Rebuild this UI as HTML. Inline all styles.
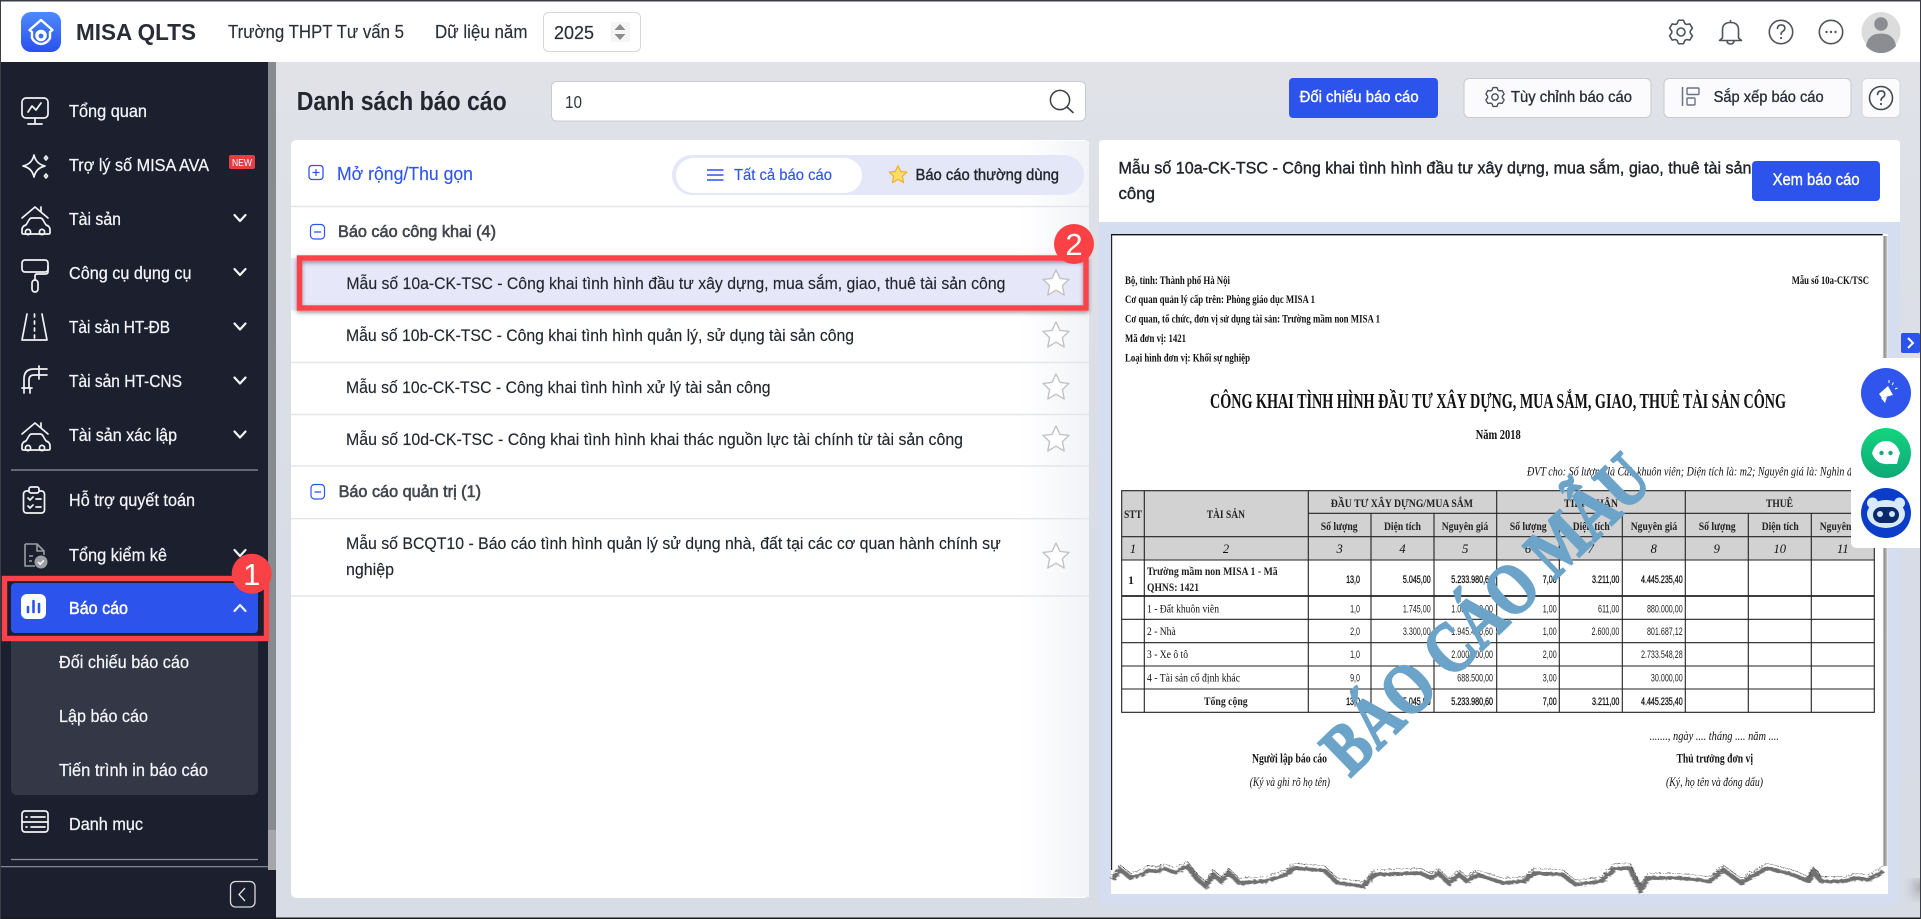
<!DOCTYPE html>
<html lang="vi">
<head>
<meta charset="utf-8">
<title>MISA QLTS</title>
<style>
html,body{margin:0;padding:0;width:1921px;height:919px;overflow:hidden;background:#dfe1e8}
svg{display:block;position:absolute;left:0;top:0}
text{font-family:"Liberation Sans","Noto Sans CJK SC",sans-serif;white-space:pre}
.h{font-size:18px;fill:#2b2f3a;stroke:#2b2f3a;stroke-width:.15}
.n{font-size:17.5px;fill:#f4f5f8;stroke:#f4f5f8;stroke-width:.25}
.b{font-size:16px;font-weight:400;fill:#2b2f3a;stroke:#2b2f3a;stroke-width:.35}
.r{font-size:17px;fill:#23262e;stroke:#23262e;stroke-width:.15}
.g{font-size:16.5px;fill:#43464e;stroke:#43464e;stroke-width:.6}
.bl{fill:#2f55ed;stroke:#2f55ed;stroke-width:.15}
text.s,.s text{font-family:"Liberation Serif","Noto Serif CJK SC",serif;fill:#111}
.sb{font-size:11.5px;font-weight:700}
.si{font-size:12.5px;font-style:italic}
.nu text,.nb text{font-size:11px;fill:#222;text-anchor:end}
.nb text{fill:#111;stroke:#111;stroke-width:.35}
.th text,text.th{font-family:"Liberation Serif",serif;font-size:12px;font-weight:700;fill:#222}
.c{text-anchor:middle}
.ln{stroke:#222;stroke-width:1.1}
.ic{fill:none;stroke:#f2f3f6;stroke-width:1.7;stroke-linecap:round;stroke-linejoin:round}
.tp{fill:none;stroke:#50535a;stroke-width:1.6;stroke-linecap:round;stroke-linejoin:round}
.chev{fill:none;stroke:#f4f5f8;stroke-width:2.2;stroke-linecap:round;stroke-linejoin:round}
.sep{stroke:#e4e6ea;stroke-width:1.4}
.star{fill:#fff;stroke:#c2c2c2;stroke-width:1.4;stroke-linejoin:round}
</style>
</head>
<body>
<svg width="1921" height="919" viewBox="0 0 1921 919" xmlns="http://www.w3.org/2000/svg">
<defs>
<linearGradient id="lg" x1="0" y1="0" x2="0" y2="1"><stop offset="0" stop-color="#4d8bfb"/><stop offset="1" stop-color="#2a50ee"/></linearGradient>
<linearGradient id="mbg" x1="0" y1="0" x2="0" y2="1"><stop offset="0" stop-color="#e0e2e8"/><stop offset=".6" stop-color="#d8dce6"/><stop offset="1" stop-color="#d8dce5"/></linearGradient>
<linearGradient id="pg" x1="0" y1="0" x2="1" y2="0"><stop offset="0" stop-color="#f2f4f8" stop-opacity="0"/><stop offset="1" stop-color="#f1f3f7"/></linearGradient>
<linearGradient id="sh" x1="0" y1="0" x2="1" y2="0"><stop offset="0" stop-color="#fff"/><stop offset=".35" stop-color="#8e8e8e"/><stop offset="1" stop-color="#d0d0d0"/></linearGradient>
<linearGradient id="gc" x1="0" y1="0" x2="0" y2="1"><stop offset="0" stop-color="#12d47e"/><stop offset="1" stop-color="#10a878"/></linearGradient>
<radialGradient id="cr" cx="1" cy="0.4" r="1"><stop offset="0" stop-color="#9a9a9a"/><stop offset="1" stop-color="#d8dce5" stop-opacity="0"/></radialGradient>
<filter id="bl1" x="-5%" y="-50%" width="110%" height="200%"><feTurbulence type="fractalNoise" baseFrequency=".18" numOctaves="2" seed="4" result="t"/><feDisplacementMap in="SourceGraphic" in2="t" scale="10" result="d"/><feGaussianBlur in="d" stdDeviation="1.1"/></filter>
<filter id="jit" x="-5%" y="-50%" width="110%" height="200%"><feTurbulence type="fractalNoise" baseFrequency=".18" numOctaves="2" seed="4" result="t"/><feDisplacementMap in="SourceGraphic" in2="t" scale="10"/></filter>
<filter id="ds" x="-5%" y="-20%" width="110%" height="150%"><feDropShadow dx="0" dy="2" stdDeviation="2" flood-color="#000" flood-opacity=".4"/></filter>
<path id="st" d="M0 -13 L4 -4.6 L13 -3.6 L6.4 2.6 L8.2 12 L0 7.2 L-8.2 12 L-6.4 2.6 L-13 -3.6 L-4 -4.6 Z"/>
<path id="gear" d="M-3.78 -8.5 L-2.5 -11.74 L2.5 -11.74 L3.78 -8.5 L5.47 -7.52 L8.92 -8.03 L11.41 -3.71 L9.25 -.97 L9.25 .97 L11.41 3.71 L8.92 8.03 L5.47 7.52 L3.78 8.5 L2.5 11.74 L-2.5 11.74 L-3.78 8.5 L-5.47 7.52 L-8.92 8.03 L-11.41 3.71 L-9.25 .97 L-9.25 -.97 L-11.41 -3.71 L-8.92 -8.03 L-5.47 -7.52 Z"/>
</defs>

<!-- backgrounds -->
<rect x="276" y="62" width="1645" height="857" fill="url(#mbg)"/>
<rect x="0" y="0" width="1921" height="62" fill="#fff"/>
<rect x="0" y="62" width="268" height="857" fill="#1c1f2e"/>
<rect x="268" y="62" width="8" height="768" fill="#888b8e"/>
<rect x="268" y="830" width="8" height="40" fill="#a4a6a9"/>
<rect x="268" y="870" width="8" height="49" fill="#1c1f2e"/>

<!-- HEADER -->
<rect x="21" y="12" width="40" height="40" rx="10" fill="url(#lg)"/>
<path d="M41 20 L29.5 30 L32 32 L32 38 Q35 43.5 41 44 Q47 43.5 50 38 L50 32 L52.5 30 Z" fill="none" stroke="#fff" stroke-width="2.4" stroke-linejoin="round"/>
<circle cx="41" cy="35.5" r="5.8" fill="#fff"/><circle cx="41" cy="36" r="2.4" fill="#3a6ff2"/>
<text x="76" y="40" font-size="23" font-weight="700" fill="#2a2d38" textLength="120" lengthAdjust="spacingAndGlyphs">MISA QLTS</text>
<text class="h" x="228" y="38" textLength="176" lengthAdjust="spacingAndGlyphs">Trường THPT Tư vấn 5</text>
<text class="h" x="435" y="38" textLength="92.5" lengthAdjust="spacingAndGlyphs">Dữ liệu năm</text>
<rect x="543.5" y="12.5" width="97" height="39" rx="5" fill="#fff" stroke="#d5d7dd"/>
<text x="554" y="39" font-size="18.5" fill="#2b2f3a" stroke="#2b2f3a" stroke-width=".2" textLength="40" lengthAdjust="spacingAndGlyphs">2025</text>
<rect x="611" y="22" width="19" height="20" fill="#f5f5f5"/>
<path d="M620 24 L625.5 30 L614.5 30 Z M620 40 L625.5 34 L614.5 34 Z" fill="#8d8d8d"/>
<!-- header right icons -->
<g class="tp">
<g transform="translate(1681 32)">
<use href="#gear"/>
<circle r="4"/>
</g>
<path d="M1730.5 20.5 v2 M1722.5 38 v-8 q0 -7.5 8 -7.5 t8 7.5 v8 l3 2.5 h-22 z M1727 40.5 q0 3.5 3.5 3.5 t3.5 -3.5"/>
<circle cx="1781" cy="32" r="11.7"/>
<path d="M1777.4 28.5 q0.3 -3.6 3.8 -3.6 q3.6 0 3.6 3.2 q0 2 -2 3.2 q-1.7 1 -1.7 3"/>
<circle cx="1831" cy="32" r="11.7"/>
</g>
<circle cx="1781.1" cy="38" r="1.1" fill="#50535a"/>
<circle cx="1826.5" cy="32" r="1.2" fill="#50535a"/><circle cx="1831" cy="32" r="1.2" fill="#50535a"/><circle cx="1835.5" cy="32" r="1.2" fill="#50535a"/>
<circle cx="1881" cy="31.5" r="19.5" fill="#dcdcdc"/>
<circle cx="1881" cy="24" r="6.8" fill="#8b8d93"/>
<path d="M1866 46 Q1868 33.5 1881 33.5 Q1894 33.5 1896 46 A19.5 19.5 0 0 1 1866 46 Z" fill="#8b8d93"/>

<!-- SIDEBAR -->
<g class="ic">
<rect x="22" y="98" width="26" height="20" rx="4"/><path d="M35 118 v5 M28 124 h14 M28 112 l4 -6 l4 4 l5 -7"/>
<path d="M34 155 q2 9 11 11 q-9 2 -11 11 q-2 -9 -11 -11 q9 -2 11 -11 z"/><path d="M46 156 l1.6 2 -1.6 2 -1.6 -2 z M46 174 l1.6 2 -1.6 2 -1.6 -2 z"/>
<path d="M22 218 L35 207 L48 218 M41 212 V207"/><path d="M22 230 q0 -4 4 -5 l3 -5 q1 -2 3 -2 h8 q2 0 3 2 l3 5 q4 1 4 5 v3 q0 1 -2 1 h-24 q-2 0 -2 -1 z"/><circle cx="28" cy="232" r="2.6"/><circle cx="42" cy="232" r="2.6"/>
<rect x="22" y="260" width="26" height="12" rx="3"/><path d="M48 266 v6 q0 2 -3 2 h-8 q-2 0 -2 2 v4"/><rect x="32" y="280" width="6" height="12" rx="3"/>
<path d="M27 314 L22 340 H47 L42 314 M34.5 314 v3 M34.5 321 v3 M34.5 328 v3 M34.5 335 v3"/>
<path d="M24 388 v-9 q0 -10 10 -10 h5 M29 388 v-8 q0 -5 5 -5 h5 M39 366 v13 M39 369 h8 M39 375 h8 M22 388 h10 M24 388 v5 M30 388 v5"/>
<path d="M22 434 L35 423 L48 434 M41 428 V423"/><path d="M22 446 q0 -4 4 -5 l3 -5 q1 -2 3 -2 h8 q2 0 3 2 l3 5 q4 1 4 5 v3 q0 1 -2 1 h-24 q-2 0 -2 -1 z"/><circle cx="28" cy="448" r="2.6"/><circle cx="42" cy="448" r="2.6"/>
<rect x="23.5" y="491" width="21" height="22" rx="3"/><rect x="29" y="487" width="10" height="6" rx="2" fill="#1c1f2e"/><path d="M28 498 l2 2 3 -3 M36 499 h5 M28 506 l2 2 3 -3 M36 507 h5"/>
<rect x="22" y="811" width="26" height="21" rx="3"/><path d="M22 822 h26 M26 817 h1 M31 817 h14 M26 827 h1 M31 827 h14"/>
</g>
<g fill="none" stroke="#9c9ea4" stroke-width="1.6" stroke-linejoin="round"><path d="M25 544 h12 l7 7 v4 M25 544 v22 h10 M37 544 v7 h7 M29 556 h4 M29 561 h3"/></g>
<circle cx="41" cy="562" r="6.5" fill="#9c9ea4"/><path d="M38 562 l2.2 2.2 3.6 -3.8" fill="none" stroke="#fff" stroke-width="1.4"/>

<text class="n" x="69" y="117" textLength="78" lengthAdjust="spacingAndGlyphs">Tổng quan</text>
<text class="n" x="69" y="171" textLength="140" lengthAdjust="spacingAndGlyphs">Trợ lý số MISA AVA</text>
<rect x="229" y="155" width="26" height="14" rx="2" fill="#e43d45"/>
<text x="232" y="166" font-size="10" fill="#fff" textLength="20" lengthAdjust="spacingAndGlyphs">NEW</text>
<text class="n" x="69" y="225" textLength="52" lengthAdjust="spacingAndGlyphs">Tài sản</text>
<text class="n" x="69" y="279" textLength="122.5" lengthAdjust="spacingAndGlyphs">Công cụ dụng cụ</text>
<text class="n" x="69" y="333" textLength="101" lengthAdjust="spacingAndGlyphs">Tài sản HT-ĐB</text>
<text class="n" x="69" y="387" textLength="113" lengthAdjust="spacingAndGlyphs">Tài sản HT-CNS</text>
<text class="n" x="69" y="441" textLength="108" lengthAdjust="spacingAndGlyphs">Tài sản xác lập</text>
<line x1="11" y1="470" x2="258" y2="470" stroke="#8f93a1" stroke-width="1.2"/>
<text class="n" x="69" y="506" textLength="126" lengthAdjust="spacingAndGlyphs">Hỗ trợ quyết toán</text>
<text class="n" x="69" y="561" textLength="98" lengthAdjust="spacingAndGlyphs">Tổng kiểm kê</text>
<g class="chev">
<path d="M234.5 215 L240 221 L245.5 215"/>
<path d="M234.5 269 L240 275 L245.5 269"/>
<path d="M234.5 323.5 L240 329.5 L245.5 323.5"/>
<path d="M234.5 377.5 L240 383.5 L245.5 377.5"/>
<path d="M234.5 431.5 L240 437.5 L245.5 431.5"/>
<path d="M234.5 550 L240 556 L245.5 550"/>
</g>
<!-- submenu -->
<rect x="11" y="625" width="247" height="170" rx="6" fill="#343746"/>
<text class="n" x="59" y="668" textLength="130" lengthAdjust="spacingAndGlyphs">Đối chiếu báo cáo</text>
<text class="n" x="59" y="722" textLength="89" lengthAdjust="spacingAndGlyphs">Lập báo cáo</text>
<text class="n" x="59" y="776" textLength="149" lengthAdjust="spacingAndGlyphs">Tiến trình in báo cáo</text>
<text class="n" x="69" y="830" textLength="74" lengthAdjust="spacingAndGlyphs">Danh mục</text>
<line x1="11" y1="859.5" x2="258" y2="859.5" stroke="#8f93a1" stroke-width="1.2"/>
<line x1="0" y1="866.7" x2="268" y2="866.7" stroke="#8f93a1" stroke-width="1.2"/>
<rect x="230.5" y="881.5" width="24.5" height="25.5" rx="5" fill="none" stroke="#dcdcdc" stroke-width="1.3"/>
<path d="M245 888 L239 894.5 L245 901" fill="none" stroke="#e6e6e6" stroke-width="1.3"/>
<!-- bao cao active -->
<rect x="3" y="577" width="266" height="64" fill="#1c1f2e" opacity=".9"/>
<rect x="11" y="583" width="247" height="50" rx="4" fill="#2c53ec"/>
<rect x="21" y="594" width="25" height="25" rx="6" fill="#fff"/>
<path d="M28 612 v-5 M33.5 612 v-11 M39 612 v-8" stroke="#2c53ec" stroke-width="2.6" stroke-linecap="round"/>
<text x="69" y="614" font-size="17.5" fill="#fff" stroke="#fff" stroke-width=".5" textLength="59" lengthAdjust="spacingAndGlyphs">Báo cáo</text>
<path class="chev" d="M234.5 611 L240 605 L245.5 611"/>
<rect x="4.5" y="578.5" width="262" height="60" fill="none" stroke="#fb4248" stroke-width="5.4"/>
<circle cx="251.7" cy="573.7" r="20" fill="#fa4246"/>
<text x="251.7" y="585" class="c" font-size="31" fill="#fff">1</text>

<!-- TOOLBAR -->
<text x="296.7" y="110" font-size="25.5" font-weight="700" fill="#23262e" textLength="210" lengthAdjust="spacingAndGlyphs">Danh sách báo cáo</text>
<rect x="551.5" y="81.5" width="534" height="39.5" rx="5" fill="#fff" stroke="#c9cbd1"/>
<text x="565" y="108" font-size="17.5" fill="#33363e" textLength="17" lengthAdjust="spacingAndGlyphs">10</text>
<circle cx="1060" cy="100" r="9.6" fill="none" stroke="#3c3f46" stroke-width="1.5"/><path d="M1067 107 L1073 112.5" stroke="#3c3f46" stroke-width="1.6" stroke-linecap="round"/>

<rect x="1289" y="78" width="149" height="40" rx="4" fill="#2c53ec"/>
<text x="1299.6" y="102" font-size="16" fill="#fff" stroke="#fff" stroke-width=".4" textLength="119" lengthAdjust="spacingAndGlyphs">Đối chiếu báo cáo</text>
<rect x="1464" y="78.5" width="187" height="39" rx="5" fill="#fbfbfd" stroke="#c8cad0"/>
<g transform="translate(1495 97) scale(.8)" fill="none" stroke="#4a4d55" stroke-width="1.7" stroke-linejoin="round">
<use href="#gear"/>
<circle r="4"/>
</g>
<text class="b" x="1511" y="102" textLength="121" lengthAdjust="spacingAndGlyphs">Tùy chỉnh báo cáo</text>
<rect x="1664" y="78.5" width="187" height="39" rx="5" fill="#fbfbfd" stroke="#c8cad0"/>
<path d="M1682.5 87 v19" stroke="#6a7385" stroke-width="1.5"/>
<rect x="1687" y="88" width="12" height="6.5" rx="1" fill="none" stroke="#6a7385" stroke-width="1.4"/>
<rect x="1687" y="98" width="8" height="7" rx="1" fill="none" stroke="#6a7385" stroke-width="1.4"/>
<text class="b" x="1713.6" y="102" textLength="110" lengthAdjust="spacingAndGlyphs">Sắp xếp báo cáo</text>
<rect x="1862" y="78.5" width="38" height="39" rx="5" fill="#fbfbfd" stroke="#d4d6dc"/>
<circle cx="1881" cy="98" r="11.5" fill="none" stroke="#45484f" stroke-width="1.6"/>
<path d="M1877.5 94.5 q0.3 -3.6 3.7 -3.6 q3.5 0 3.5 3.2 q0 2 -2 3.2 q-1.6 1 -1.6 3" fill="none" stroke="#45484f" stroke-width="1.6" stroke-linecap="round"/>
<circle cx="1881" cy="104" r="1.1" fill="#45484f"/>

<!-- LEFT PANEL -->
<rect x="291" y="140" width="798" height="758" rx="5" fill="#fff"/>
<rect x="1020" y="141" width="69" height="756" fill="url(#pg)"/>
<rect x="309" y="165.5" width="14" height="14" rx="3" fill="none" stroke="#2f55ed" stroke-width="1.3"/>
<path d="M316 169 v7 M312.5 172.5 h7" stroke="#2f55ed" stroke-width="1.2"/>
<text x="337" y="180" font-size="18" class="bl" textLength="136" lengthAdjust="spacingAndGlyphs">Mở rộng/Thu gọn</text>
<line class="sep" x1="291" y1="206.5" x2="1089" y2="206.5"/>
<rect x="672" y="155" width="412" height="40" rx="20" fill="#e4e7f8"/>
<rect x="676" y="158" width="186" height="35" rx="17.5" fill="#fff"/>
<path d="M707 170 h16.5 M707 175 h16.5 M707 180 h16.5" stroke="#2f55ed" stroke-width="1.4"/>
<text x="734" y="180" font-size="16" class="bl" textLength="98" lengthAdjust="spacingAndGlyphs">Tất cả báo cáo</text>
<path transform="translate(898 174.5) scale(.68)" d="M0 -13 L4 -4.6 L13 -3.6 L6.4 2.6 L8.2 12 L0 7.2 L-8.2 12 L-6.4 2.6 L-13 -3.6 L-4 -4.6 Z" fill="#fddc6a" stroke="#eeb22e" stroke-width="1.8" stroke-linejoin="round"/>
<text x="915.5" y="180" font-size="16" fill="#22252c" stroke="#22252c" stroke-width=".4" textLength="143.5" lengthAdjust="spacingAndGlyphs">Báo cáo thường dùng</text>

<rect x="310.5" y="224.5" width="14" height="14.5" rx="3.5" fill="none" stroke="#2f55ed" stroke-width="1.2"/><path d="M314 232 h7" stroke="#2f55ed" stroke-width="1.3"/>
<text class="g" x="338" y="237" textLength="158" lengthAdjust="spacingAndGlyphs">Báo cáo công khai (4)</text>

<rect x="291" y="258" width="798" height="52.5" fill="#e6e8f9"/>
<rect x="299.5" y="258" width="786.5" height="50" fill="none" stroke="#fb4248" stroke-width="5.4" filter="url(#ds)"/>
<text class="r" x="346.4" y="289" textLength="659" lengthAdjust="spacingAndGlyphs">Mẫu số 10a-CK-TSC - Công khai tình hình đầu tư xây dựng, mua sắm, giao, thuê tài sản công</text>
<circle cx="1074" cy="244" r="20" fill="#fa4246"/>
<text x="1074" y="255" class="c" font-size="31" fill="#fff">2</text>
<use href="#st" x="1056" y="283" class="star"/>

<text class="r" x="346" y="341" textLength="508" lengthAdjust="spacingAndGlyphs">Mẫu số 10b-CK-TSC - Công khai tình hình quản lý, sử dụng tài sản công</text>
<use href="#st" x="1056" y="335" class="star"/>
<line class="sep" x1="291" y1="362.5" x2="1089" y2="362.5"/>
<text class="r" x="346" y="393" textLength="424.5" lengthAdjust="spacingAndGlyphs">Mẫu số 10c-CK-TSC - Công khai tình hình xử lý tài sản công</text>
<use href="#st" x="1056" y="387" class="star"/>
<line class="sep" x1="291" y1="414.5" x2="1089" y2="414.5"/>
<text class="r" x="346" y="445" textLength="617" lengthAdjust="spacingAndGlyphs">Mẫu số 10d-CK-TSC - Công khai tình hình khai thác nguồn lực tài chính từ tài sản công</text>
<use href="#st" x="1056" y="439" class="star"/>
<line class="sep" x1="291" y1="466" x2="1089" y2="466"/>
<rect x="311" y="484.5" width="13.5" height="14.5" rx="3.5" fill="none" stroke="#2f55ed" stroke-width="1.2"/><path d="M314.5 492 h6.5" stroke="#2f55ed" stroke-width="1.3"/>
<text class="g" x="338.6" y="497" textLength="142.4" lengthAdjust="spacingAndGlyphs">Báo cáo quản trị (1)</text>
<line class="sep" x1="291" y1="518.7" x2="1089" y2="518.7"/>
<text class="r" x="346" y="549" textLength="654.7" lengthAdjust="spacingAndGlyphs">Mẫu số BCQT10 - Báo cáo tình hình quản lý sử dụng nhà, đất tại các cơ quan hành chính sự</text>
<text class="r" x="346" y="575" textLength="48" lengthAdjust="spacingAndGlyphs">nghiệp</text>
<use href="#st" x="1056" y="556" class="star"/>
<line class="sep" x1="291" y1="596" x2="1089" y2="596"/>

<!-- RIGHT PANEL -->
<rect x="1099" y="140" width="801" height="765" rx="4" fill="#d5ddf0"/>
<path d="M1099 222 V144 Q1099 140 1103 140 H1896 Q1900 140 1900 144 V222 Z" fill="#fff"/>
<text x="1118.5" y="173.3" font-size="17" fill="#22252c" stroke="#22252c" stroke-width=".4" textLength="633" lengthAdjust="spacingAndGlyphs">Mẫu số 10a-CK-TSC - Công khai tình hình đầu tư xây dựng, mua sắm, giao, thuê tài sản</text>
<text x="1118.5" y="199" font-size="17" fill="#22252c" stroke="#22252c" stroke-width=".4" textLength="36.5" lengthAdjust="spacingAndGlyphs">công</text>
<rect x="1752" y="161" width="128" height="40" rx="4" fill="#2c53ec"/>
<text x="1772.6" y="185" font-size="16.5" fill="#fff" stroke="#fff" stroke-width=".4" textLength="87" lengthAdjust="spacingAndGlyphs">Xem báo cáo</text>

<!-- document -->
<rect x="1111" y="234" width="777" height="660" fill="#fff"/>
<rect x="1882.5" y="236" width="5" height="630" fill="url(#sh)"/>
<line x1="1111.6" y1="234" x2="1111.6" y2="870" stroke="#222" stroke-width="1.2"/>
<line x1="1111" y1="234.7" x2="1882.6" y2="234.7" stroke="#111" stroke-width="1.3"/>

<text class="s sb" x="1125" y="284" textLength="105" lengthAdjust="spacingAndGlyphs">Bộ, tỉnh: Thành phố Hà Nội</text>
<text class="s sb" x="1125" y="303" textLength="190" lengthAdjust="spacingAndGlyphs">Cơ quan quản lý cấp trên: Phòng giáo dục MISA 1</text>
<text class="s sb" x="1125" y="322.7" textLength="255" lengthAdjust="spacingAndGlyphs">Cơ quan, tổ chức, đơn vị sử dụng tài sản: Trường mầm non MISA 1</text>
<text class="s sb" x="1125" y="342" textLength="61" lengthAdjust="spacingAndGlyphs">Mã đơn vị: 1421</text>
<text class="s sb" x="1125" y="361.7" textLength="125" lengthAdjust="spacingAndGlyphs">Loại hình đơn vị: Khối sự nghiệp</text>
<text class="s sb" x="1791.7" y="284" textLength="77.3" lengthAdjust="spacingAndGlyphs">Mẫu số 10a-CK/TSC</text>
<text class="s" x="1210" y="408" font-size="21" font-weight="700" textLength="576" lengthAdjust="spacingAndGlyphs">CÔNG KHAI TÌNH HÌNH ĐẦU TƯ XÂY DỰNG, MUA SẮM, GIAO, THUÊ TÀI SẢN CÔNG</text>
<text class="s" x="1475.7" y="439" font-size="13.5" font-weight="700" textLength="45" lengthAdjust="spacingAndGlyphs">Năm 2018</text>
<text class="s si" x="1527" y="475.7" textLength="340" lengthAdjust="spacingAndGlyphs">ĐVT cho: Số lượng là Cái, khuôn viên; Diện tích là: m2; Nguyên giá là: Nghìn đồng</text>

<!-- table -->
<rect x="1121.7" y="490.7" width="752.6" height="69.3" fill="#d2d2d2"/>
<g class="ln">
<path fill="none" d="M1121.7 490.7 H1874.3 V712.3 H1121.7 Z"/>
<path d="M1308.3 513.3 H1874.3 M1121.7 536.7 H1874.3 M1121.7 560 H1874.3 M1121.7 619.3 H1874.3 M1121.7 642.7 H1874.3 M1121.7 666 H1874.3 M1121.7 689 H1874.3"/>
<path stroke-width="1.8" d="M1121.7 596 H1874.3"/>
<path d="M1144.3 490.7 V712.3 M1308.3 490.7 V712.3 M1496.7 490.7 V712.3 M1685.3 490.7 V712.3 M1371 513.3 V712.3 M1434 513.3 V712.3 M1559.3 513.3 V712.3 M1622.3 513.3 V712.3 M1748.3 513.3 V712.3 M1811.3 513.3 V712.3"/>
</g>
<g class="th">
<text x="1124" y="518" textLength="18" lengthAdjust="spacingAndGlyphs">STT</text>
<text x="1206.7" y="518" textLength="38.3" lengthAdjust="spacingAndGlyphs">TÀI SẢN</text>
<text x="1330.7" y="507" textLength="142.3" lengthAdjust="spacingAndGlyphs">ĐẦU TƯ XÂY DỰNG/MUA SẮM</text>
<text x="1564" y="507" textLength="54" lengthAdjust="spacingAndGlyphs">TIẾP NHẬN</text>
<text x="1766" y="507" textLength="27" lengthAdjust="spacingAndGlyphs">THUÊ</text>
<text x="1320.7" y="530" textLength="37" lengthAdjust="spacingAndGlyphs">Số lượng</text>
<text x="1384" y="530" textLength="37" lengthAdjust="spacingAndGlyphs">Diện tích</text>
<text x="1441.7" y="530" textLength="46.5" lengthAdjust="spacingAndGlyphs">Nguyên giá</text>
<text x="1509.7" y="530" textLength="37" lengthAdjust="spacingAndGlyphs">Số lượng</text>
<text x="1572.7" y="530" textLength="37" lengthAdjust="spacingAndGlyphs">Diện tích</text>
<text x="1630.7" y="530" textLength="46.5" lengthAdjust="spacingAndGlyphs">Nguyên giá</text>
<text x="1698.7" y="530" textLength="37" lengthAdjust="spacingAndGlyphs">Số lượng</text>
<text x="1761.7" y="530" textLength="37" lengthAdjust="spacingAndGlyphs">Diện tích</text>
<text x="1819.7" y="530" textLength="46.5" lengthAdjust="spacingAndGlyphs">Nguyên giá</text>
</g>
<g class="s" font-size="12.5" font-style="italic">
<text class="c" x="1133" y="553">1</text><text class="c" x="1226" y="553">2</text><text class="c" x="1339.6" y="553">3</text><text class="c" x="1402.5" y="553">4</text><text class="c" x="1465.3" y="553">5</text><text class="c" x="1528" y="553">6</text><text class="c" x="1590.8" y="553">7</text><text class="c" x="1653.8" y="553">8</text><text class="c" x="1716.8" y="553">9</text><text class="c" x="1779.8" y="553">10</text><text class="c" x="1842.8" y="553">11</text>
</g>
<text class="th" x="1128" y="584">1</text>
<text class="th" x="1147" y="575" textLength="130.7" lengthAdjust="spacingAndGlyphs">Trường mầm non MISA 1 - Mã</text>
<text class="th" x="1147" y="591" textLength="52" lengthAdjust="spacingAndGlyphs">QHNS: 1421</text>
<g class="s" font-size="12">
<text x="1147" y="612.7" textLength="72" lengthAdjust="spacingAndGlyphs">1 - Đất khuôn viên</text>
<text x="1147" y="635" textLength="28.7" lengthAdjust="spacingAndGlyphs">2 - Nhà</text>
<text x="1147" y="658" textLength="41" lengthAdjust="spacingAndGlyphs">3 - Xe ô tô</text>
<text x="1147" y="681.7" textLength="93" lengthAdjust="spacingAndGlyphs">4 - Tài sản cố định khác</text>
</g>
<text class="th" x="1204" y="705" textLength="43.7" lengthAdjust="spacingAndGlyphs">Tổng cộng</text>
<!-- numbers: columns condensed horizontally -->
<g class="nu" transform="translate(1360 0) scale(.65 1)"><text y="612.7">1,0</text><text y="635">2,0</text><text y="658">1,0</text><text y="681.7">9,0</text></g>
<g class="nb" transform="translate(1360 0) scale(.65 1)"><text y="583">13,0</text><text y="705">13,0</text></g>
<g class="nu" transform="translate(1430.7 0) scale(.65 1)"><text y="612.7">1.745,00</text><text y="635">3.300,00</text></g>
<g class="nb" transform="translate(1430.7 0) scale(.65 1)"><text y="583">5.045,00</text><text y="705">5.045,00</text></g>
<g class="nu" transform="translate(1493 0) scale(.65 1)"><text y="612.7">1.000.000,00</text><text y="635">1.945.480,60</text><text y="658">2.000.000,00</text><text y="681.7">688.500,00</text></g>
<g class="nb" transform="translate(1493 0) scale(.65 1)"><text y="583">5.233.980,60</text><text y="705">5.233.980,60</text></g>
<g class="nu" transform="translate(1556.7 0) scale(.65 1)"><text y="612.7">1,00</text><text y="635">1,00</text><text y="658">2,00</text><text y="681.7">3,00</text></g>
<g class="nb" transform="translate(1556.7 0) scale(.65 1)"><text y="583">7,00</text><text y="705">7,00</text></g>
<g class="nu" transform="translate(1619.3 0) scale(.65 1)"><text y="612.7">611,00</text><text y="635">2.600,00</text></g>
<g class="nb" transform="translate(1619.3 0) scale(.65 1)"><text y="583">3.211,00</text><text y="705">3.211,00</text></g>
<g class="nu" transform="translate(1682.7 0) scale(.65 1)"><text y="612.7">880.000,00</text><text y="635">801.687,12</text><text y="658">2.733.548,28</text><text y="681.7">30.000,00</text></g>
<g class="nb" transform="translate(1682.7 0) scale(.65 1)"><text y="583">4.445.235,40</text><text y="705">4.445.235,40</text></g>

<!-- footer -->
<text class="s si" x="1649.6" y="740" textLength="129.4" lengthAdjust="spacingAndGlyphs">......., ngày .... tháng .... năm ....</text>
<text class="s" x="1676.5" y="762.7" font-size="13" font-weight="700" textLength="76.5" lengthAdjust="spacingAndGlyphs">Thủ trưởng đơn vị</text>
<text class="s si" x="1666" y="786" textLength="97" lengthAdjust="spacingAndGlyphs">(Ký, họ tên và đóng dấu)</text>
<text class="s" x="1252" y="762.7" font-size="13" font-weight="700" textLength="75" lengthAdjust="spacingAndGlyphs">Người lập báo cáo</text>
<text class="s si" x="1249.7" y="786" textLength="80.3" lengthAdjust="spacingAndGlyphs">(Ký và ghi rõ họ tên)</text>

<!-- torn edge -->
<g transform="translate(1110 700) scale(.5173 .3333)">
<path transform="translate(0 14)" filter="url(#bl1)" fill="none" stroke="#6f6f6f" stroke-width="11" d="M5 525 L20 495 L40 520 L60 510 L75 497 L90 500 L105 492 L125 503 L150 485 L170 525 L185 545 L200 510 L215 530 L230 505 L250 535 L300 530 L340 510 L355 490 L415 498 L440 535 L490 545 L510 510 L600 505 L620 520 L635 505 L655 535 L675 510 L690 530 L710 510 L740 525 L760 535 L800 530 L820 505 L875 510 L900 540 L950 530 L975 492 L1005 490 L1025 555 L1040 520 L1100 520 L1160 530 L1185 495 L1220 535 L1270 490 L1320 510 L1350 530 L1360 500 L1375 530 L1420 530 L1440 520 L1465 525 L1495 500"/>
<path filter="url(#jit)" fill="none" stroke="#333" stroke-width="1.2" d="M5 525 L20 495 L40 520 L60 510 L75 497 L90 500 L105 492 L125 503 L150 485 L170 525 L185 545 L200 510 L215 530 L230 505 L250 535 L300 530 L340 510 L355 490 L415 498 L440 535 L490 545 L510 510 L600 505 L620 520 L635 505 L655 535 L675 510 L690 530 L710 510 L740 525 L760 535 L800 530 L820 505 L875 510 L900 540 L950 530 L975 492 L1005 490 L1025 555 L1040 520 L1100 520 L1160 530 L1185 495 L1220 535 L1270 490 L1320 510 L1350 530 L1360 500 L1375 530 L1420 530 L1440 520 L1465 525 L1495 500"/>
</g>

<!-- watermark -->
<text transform="translate(1350 778) rotate(-44)" x="0" y="0" font-size="72" font-weight="700" style="font-family:'Liberation Serif',serif" fill="#6ba3c9" stroke="#6ba3c9" stroke-width="2.2" textLength="423" lengthAdjust="spacingAndGlyphs">BÁO CÁO MẪU</text>

<!-- right floating -->
<rect x="1901" y="333" width="19" height="20" rx="2" fill="#2c53ec"/>
<path d="M1908 338 L1913 343 L1908 348" fill="none" stroke="#fff" stroke-width="2"/>
<path d="M1920 358 H1857 Q1851 358 1851 364 V542 Q1851 548 1857 548 H1920 Z" fill="#fff"/>
<circle cx="1886" cy="393" r="25" fill="#2f55ed"/>
<path d="M1879 394 L1888 386 L1893 395 L1882 398 Z" fill="#fff"/><path d="M1881 398 L1885 403 L1887 397 Z" fill="#fff"/><path d="M1892 385 l1.5 -2.5 M1895 389 l2.5 -1 M1889 383 l0 -3" stroke="#fff" stroke-width="1"/>
<circle cx="1886" cy="453" r="25" fill="url(#gc)"/>
<path d="M1872 453 Q1876 441 1886 441 Q1896 441 1900 453 Q1898 459 1897 464 L1889 464 Q1876 465 1872 453 Z" fill="#fff"/><circle cx="1881.5" cy="453" r="2.2" fill="#12a87a"/><circle cx="1890.5" cy="453" r="2.2" fill="#12a87a"/>
<circle cx="1886" cy="513" r="25" fill="#0b3dc9"/>
<circle cx="1872.5" cy="503" r="5.5" fill="#d7e9fb"/><circle cx="1899.5" cy="503" r="5.5" fill="#d7e9fb"/>
<ellipse cx="1886" cy="514" rx="19" ry="14" fill="#d7e9fb"/>
<rect x="1873" y="507" width="26" height="16" rx="8" fill="#0a2a6b"/>
<circle cx="1880" cy="514" r="3" fill="#cfe6ff"/><circle cx="1892" cy="514" r="3" fill="#cfe6ff"/>

<!-- corner shading + frame -->
<rect x="1900" y="878" width="20" height="24" fill="url(#cr)" opacity=".7"/>
<rect x="0" y="0" width="1921" height="1.5" fill="#3a3d45"/>
<rect x="0" y="917.5" width="1921" height="1.5" fill="#1a1a1a"/>
<rect x="0" y="0" width="1" height="919" fill="#3a3d45"/>
<rect x="1920" y="0" width="1" height="919" fill="#3a3d45"/>
</svg>
</body>
</html>
